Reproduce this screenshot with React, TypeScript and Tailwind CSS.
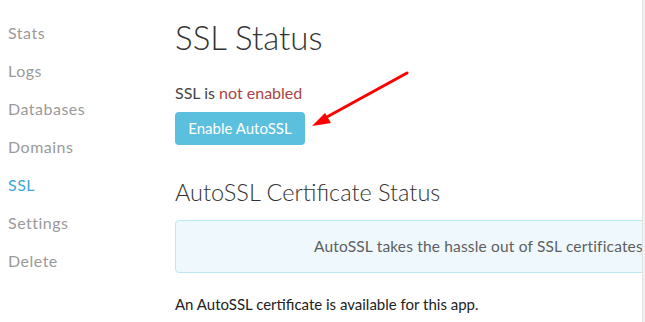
const NAV = ["Stats", "Logs", "Databases", "Domains", "SSL", "Settings", "Delete"];

export default function App() {
  return (
    <div
      className="flex h-[322px] w-[645px] overflow-hidden bg-white"
      style={{ fontFamily: "Lato, 'Open Sans', sans-serif" }}
    >
      <div className="flex min-w-0 flex-1 overflow-hidden">
        <nav className="flex w-[175px] shrink-0 flex-col gap-[16px] pl-[8px] pt-[22px]">
          {NAV.map((item) => (
            <a
              key={item}
              className={`block h-[22px] text-[16px] leading-[22px] tracking-[0.5px] ${
                item === "SSL" ? "text-[#3aa8d8]" : "text-[#9a9a9a]"
              }`}
            >
              {item}
            </a>
          ))}
        </nav>

        <main className="relative w-[520px] shrink-0 pt-[18px]">
          <h1 className="text-[33px] font-light leading-[38px] text-[#333]">SSL Status</h1>
          <p className="mt-[27px] text-[16px] leading-[20px] text-[#444]">
            SSL is <span className="text-[#a94442]">not enabled</span>
          </p>
          <button className="mt-[9px] h-[33px] w-[130px] rounded-[4px] bg-[#5bc0de] text-[15px] text-white">
            Enable AutoSSL
          </button>
          <h2 className="mt-[33px] text-[23.5px] font-light leading-[28px] text-[#333]">
            AutoSSL Certificate Status
          </h2>
          <div className="mt-[14px] flex h-[53px] items-center rounded-[4px] border border-[#bce8f1] bg-[#eef8fd] pl-[138px] text-[15.5px] tracking-[0.17px] text-[#5f5f5f]">
            <span className="whitespace-nowrap">AutoSSL takes the hassle out of SSL certificates</span>
          </div>
          <p className="mt-[21px] text-[15px] leading-[20px] text-[#222]">
            An AutoSSL certificate is available for this app.
          </p>

          <svg
            className="pointer-events-none absolute left-[130px] top-[65px]"
            width="110"
            height="70"
            viewBox="130 65 110 70"
          >
            <line x1="232" y1="73" x2="150" y2="118" stroke="#ff0000" strokeWidth="3" strokeLinecap="round" />
            <polygon points="137,126 150,113 156,123" fill="#ff0000" />
          </svg>
        </main>
      </div>
      <div className="w-[3px] shrink-0 border-l border-[#e2e2e2] bg-[#f2f2f2]" />
    </div>
  );
}
